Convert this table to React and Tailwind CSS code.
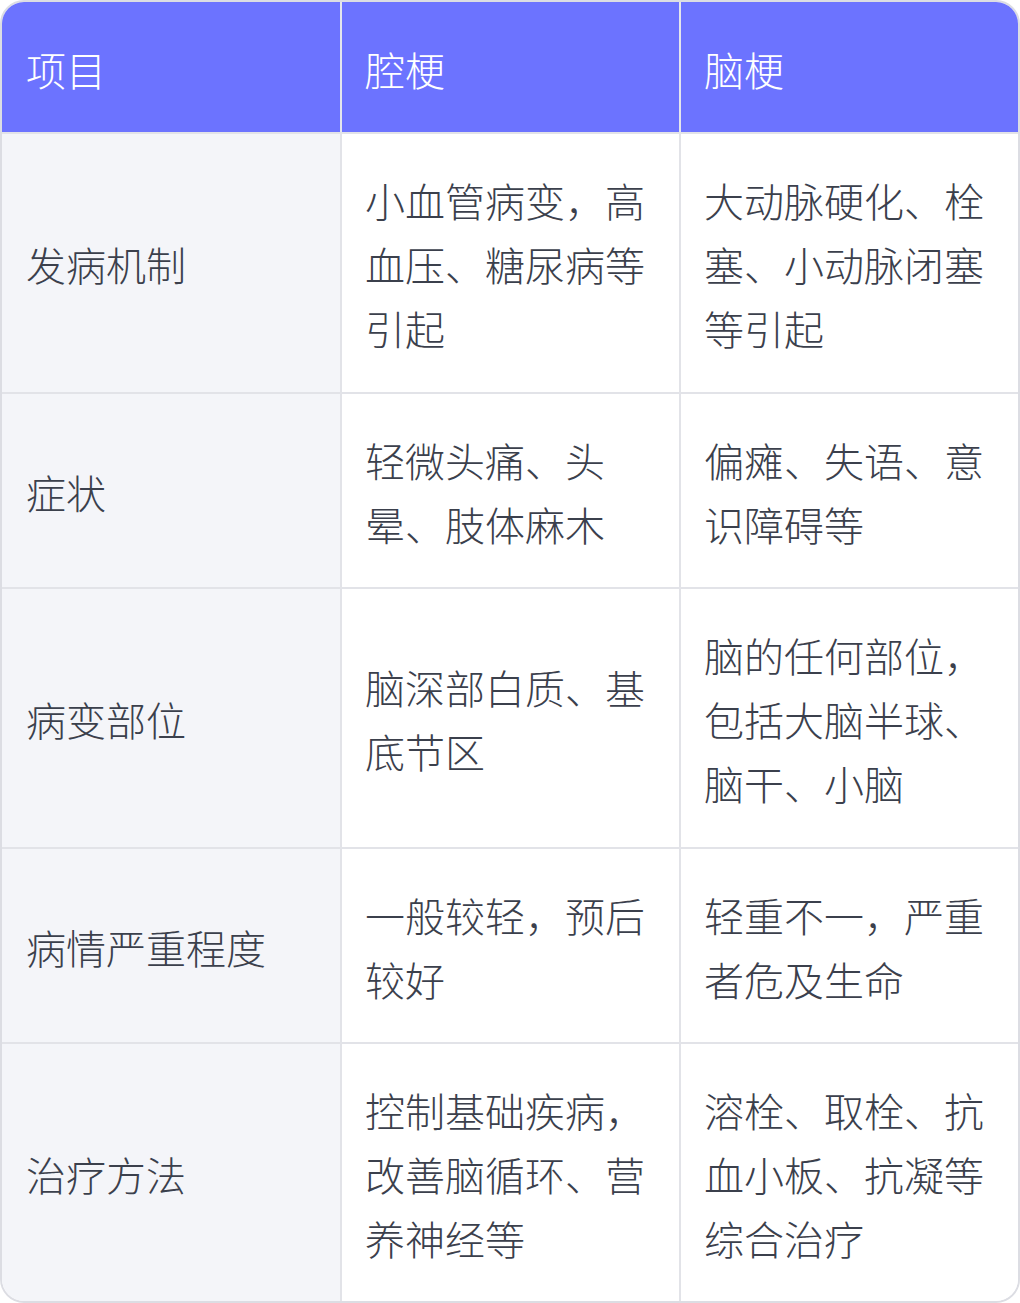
const headers = ["项目", "腔梗", "脑梗"];

const rows = [
  { h: "h-[260px]", cells: ["发病机制", "小血管病变，高血压、糖尿病等引起", "大动脉硬化、栓塞、小动脉闭塞等引起"] },
  { h: "h-[195px]", cells: ["症状", "轻微头痛、头晕、肢体麻木", "偏瘫、失语、意识障碍等"] },
  { h: "h-[260px]", cells: ["病变部位", "脑深部白质、基底节区", "脑的任何部位，包括大脑半球、脑干、小脑"] },
  { h: "h-[195px]", cells: ["病情严重程度", "一般较轻，预后较好", "轻重不一，严重者危及生命"] },
  { h: "h-[259px]", cells: ["治疗方法", "控制基础疾病，改善脑循环、营养神经等", "溶栓、取栓、抗血小板、抗凝等综合治疗"] },
];

export default function App() {
  return (
    <div className="w-[1020px] h-[1303px] bg-white">
      <div
        className="h-full rounded-[24px] border-2 border-[#dcdde3] overflow-hidden bg-white text-[40px] leading-[64px] font-light text-[#3b404c]"
        style={{ fontFamily: '"Noto Sans CJK SC", "Noto Sans", sans-serif' }}
      >
        <div className="grid grid-cols-[338px_339px_1fr] bg-[#6c73ff] text-white">
          {headers.map((h, i) => (
            <div
              key={i}
              className={`h-[130px] flex items-center pt-[4px] ${i > 0 ? "border-l-2 border-[#e4e5ec] pl-[23px]" : "pl-[24px]"}`}
            >
              {h}
            </div>
          ))}
        </div>
        {rows.map((row, r) => (
          <div key={r} className={`grid grid-cols-[338px_339px_1fr] border-t-2 border-[#e2e3e8] ${row.h}`}>
            {row.cells.map((cell, c) => (
              <div
                key={c}
                className={`flex items-center pr-[22px] pt-[2px] ${c === 0 ? "bg-[#f4f5f9] pl-[24px]" : "bg-white border-l-2 border-[#e2e3e8] pl-[23px]"}`}
              >
                <span>{cell}</span>
              </div>
            ))}
          </div>
        ))}
      </div>
    </div>
  );
}
